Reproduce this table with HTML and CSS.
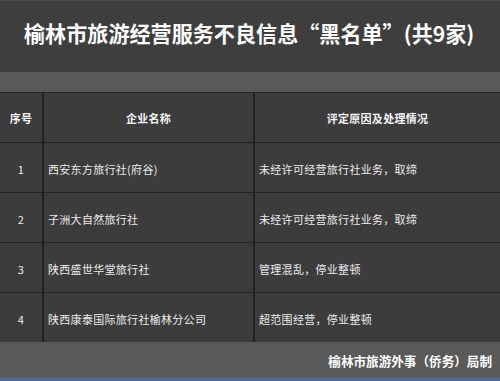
FILE: index.html
```html
<!DOCTYPE html>
<html lang="zh">
<head>
<meta charset="utf-8">
<link rel="stylesheet" href="styles.css">
</head>
<body>
<div class="page">
  <header class="title-band">
    <h1 class="title">榆林市旅游经营服务不良信息“黑名单”(共9家)</h1>
  </header>
  <div class="spacer-band"></div>
  <div class="table">
    <div class="row head">
      <div class="cell c1">序号</div>
      <div class="cell c2">企业名称</div>
      <div class="cell c3">评定原因及处理情况</div>
    </div>
    <div class="row">
      <div class="cell c1">1</div>
      <div class="cell c2 left">西安东方旅行社(府谷)</div>
      <div class="cell c3 left">未经许可经营旅行社业务，取缔</div>
    </div>
    <div class="row">
      <div class="cell c1">2</div>
      <div class="cell c2 left">子洲大自然旅行社</div>
      <div class="cell c3 left">未经许可经营旅行社业务，取缔</div>
    </div>
    <div class="row">
      <div class="cell c1">3</div>
      <div class="cell c2 left">陕西盛世华堂旅行社</div>
      <div class="cell c3 left">管理混乱，停业整顿</div>
    </div>
    <div class="row last">
      <div class="cell c1">4</div>
      <div class="cell c2 left">陕西康泰国际旅行社榆林分公司</div>
      <div class="cell c3 left">超范围经营，停业整顿</div>
    </div>
  </div>
  <footer class="footer">榆林市旅游外事（侨务）局制</footer>
  <div class="bottom-line"></div>
</div>
</body>
</html>
```

FILE: styles.css
```css
* { box-sizing: border-box; }
html, body { margin: 0; padding: 0; }
body {
  width: 500px;
  height: 381px;
  overflow: hidden;
  background: #3d3d3d;
  font-family: "Noto Sans CJK SC", "Noto Sans", sans-serif;
  color: #ececec;
}
.page { display: flex; flex-direction: column; width: 500px; height: 381px; }
.title-band {
  height: 72px;
  background: #3e3e3e;
  border-top: 1px solid #4a4a4a;
  display: flex;
  align-items: center;
  padding-left: 24px;
  padding-bottom: 5px;
}
.title {
  margin: 0;
  font-size: 21.1px;
  font-weight: 700;
  color: #ffffff;
  letter-spacing: 0;
  line-height: 1;
  white-space: nowrap;
}
.spacer-band { height: 20px; background: #595959; }
.table {
  height: 250px;
  background: #3c3c3c;
  border-top: 1px solid #262626;
  display: flex;
  flex-direction: column;
}
.row {
  height: 50px;
  display: flex;
  border-bottom: 1px solid #222222;
}
.row.last { border-bottom: none; height: 49px; }
.cell {
  display: flex;
  align-items: center;
  justify-content: center;
  font-size: 11px;
  letter-spacing: 0.3px;
  padding-top: 2px;
  white-space: nowrap;
}
.c1 { width: 44px; border-right: 2px solid #222222; }
.c2 { width: 211px; border-right: 2px solid #222222; }
.c3 { flex: 1; }
.left { justify-content: flex-start; padding-left: 4px; }
.head .cell { font-weight: 700; color: #f4f4f4; padding-top: 0; }
.footer {
  height: 36px;
  background: #5a5a5a;
  display: flex;
  align-items: center;
  justify-content: flex-end;
  padding-right: 8px;
  font-size: 12.6px;
  font-weight: 700;
  color: #ffffff;
}
.bottom-line { height: 3px; background: #4d6a98; }
```
